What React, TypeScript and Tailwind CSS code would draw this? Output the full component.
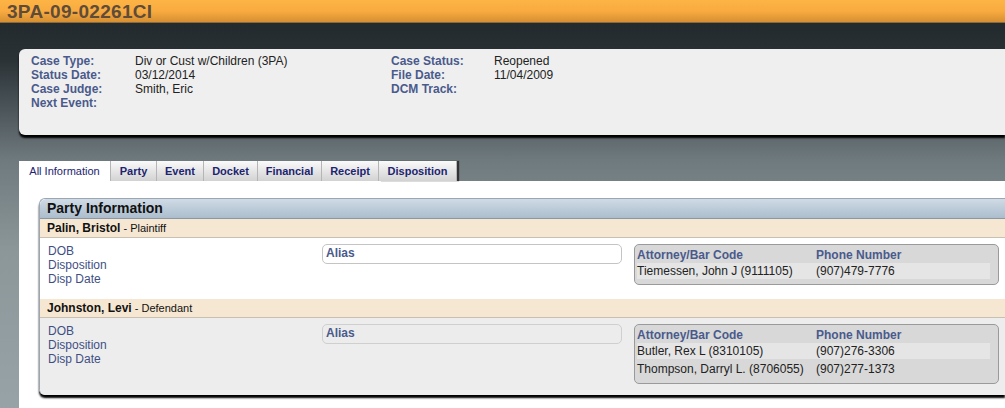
import React from "react";

const label = "text-[#4a5a8c] font-bold";

function InfoRow({ l, v, l2, v2 }: { l: string; v?: string; l2?: string; v2?: string }) {
  return (
    <div className="flex h-[14px]">
      <div className={`w-[104px] ${label}`}>{l}</div>
      <div className="w-[256px] text-[#222]">{v}</div>
      <div className={`w-[103px] ${label}`}>{l2}</div>
      <div className="text-[#222]">{v2}</div>
    </div>
  );
}

const tabs = ["All Information", "Party", "Event", "Docket", "Financial", "Receipt", "Disposition"];
const tabW = ["w-[92px]", "w-[46px]", "w-[47px]", "w-[54px]", "w-[64px]", "w-[57px]", "w-[78px]"];

function Party({
  name,
  role,
  bg,
  attorneys,
  last,
}: {
  name: string;
  role: string;
  bg: string;
  attorneys: [string, string][];
  last?: boolean;
}) {
  return (
    <>
      <div className="h-[19px] bg-[#f6e7d2] border-b border-[#c9c0b2] pl-[7px] flex items-center text-[12px]">
        <span className="font-bold text-[#111]">{name}</span>
        <span className="text-[11px] text-[#111]">&nbsp;- {role}</span>
      </div>
      <div className={`${bg} flex ${last ? "h-[77px] rounded-bl-[6px]" : "h-[61px]"} pt-[6px]`}>
        <div className="w-[282px] pl-[8px] text-[12px] leading-[14px] text-[#3f4f85]">
          <div>DOB</div>
          <div>Disposition</div>
          <div>Disp Date</div>
        </div>
        <div
          className={`w-[300px] h-[20px] rounded-[5px] border ${
            last ? "border-[#cfcfcf] bg-[#ececec]" : "border-[#c4c4c4] bg-white"
          } pl-[3px] text-[12px] leading-[17px] font-bold text-[#4a5a8c]`}
        >
          Alias
        </div>
        <div className="ml-[12px] w-[365px] self-start rounded-[5px] border border-[#9a9a9a] bg-[#d8d8d8] pl-[2px] pr-[8px] pt-[2px] pb-[5px] text-[12px]">
          <div className="flex h-[15px] items-center font-bold text-[#4a5a8c]">
            <div className="w-[179px]">Attorney/Bar Code</div>
            <div>Phone Number</div>
          </div>
          {attorneys.map(([a, p], i) => (
            <div
              key={i}
              className={`flex items-center text-[#222] ${i === 0 ? "h-[16px] bg-[#e5e5e5] mt-[1px]" : "h-[19px]"}`}
            >
              <div className="w-[179px] whitespace-nowrap">{a}</div>
              <div>{p}</div>
            </div>
          ))}
        </div>
      </div>
    </>
  );
}

export default function App() {
  return (
    <div
      className="w-[1005px] h-[408px] overflow-hidden flex flex-col"
      style={{ fontFamily: '"Liberation Sans", Arial, sans-serif' }}
    >
      <div className="h-[23px] shrink-0 bg-gradient-to-b from-[#fdb445] via-[#f9ab40] to-[#d68f32] border-b border-[#8a6a3a] pl-[7px] flex items-center">
        <span className="text-[19px] font-bold text-[#5e4c39] leading-none tracking-[0.3px]">3PA-09-02261CI</span>
      </div>
      <div className="flex-1 bg-[linear-gradient(to_bottom,#222a2e_0%,#2a3236_8%,#6f7a7e_30%,#8c979a_50%,#9ca8ac_100%)] pl-[19px] pt-[26px]">
        <div className="h-[86px] bg-[#efefef] rounded-l-[6px] shadow-[0_3px_2px_#000] pl-[12px] pt-[5px] text-[12px] leading-[14px]">
          <InfoRow l="Case Type:" v="Div or Cust w/Children (3PA)" l2="Case Status:" v2="Reopened" />
          <InfoRow l="Status Date:" v="03/12/2014" l2="File Date:" v2="11/04/2009" />
          <InfoRow l="Case Judge:" v="Smith, Eric" l2="DCM Track:" />
          <InfoRow l="Next Event:" />
        </div>
        <div className="mt-[26px] flex h-[20px]">
          {tabs.map((t, i) => (
            <div
              key={t}
              className={`${tabW[i]} h-[20px] flex items-center justify-center text-[11px] text-[#1c2470] border-r border-[#b5b5b5] ${
                i === 0 ? "bg-white font-normal" : "bg-gradient-to-b from-[#fafafa] to-[#d2d2d2] font-bold"
              } ${i === tabs.length - 1 ? "shadow-[2px_0_1px_#333]" : ""}`}
            >
              {t}
            </div>
          ))}
        </div>
        <div className="bg-white h-[300px] pl-[20px] pt-[17px]">
          <div className="border-l border-t border-[#9aa6b2] rounded-tl-[6px] rounded-bl-[6px] shadow-[0_3px_2px_#000]">
            <div className="h-[20px] rounded-tl-[6px] bg-gradient-to-b from-[#d0dbe6] to-[#abbdcd] border-b border-[#8a98a5] pl-[7px] flex items-center text-[14px] font-bold text-[#111]">
              Party Information
            </div>
            <Party
              name="Palin, Bristol"
              role="Plaintiff"
              bg="bg-white"
              attorneys={[["Tiemessen, John J (9111105)", "(907)479-7776"]]}
            />
            <Party
              name="Johnston, Levi"
              role="Defendant"
              bg="bg-[#ededed]"
              last
              attorneys={[
                ["Butler, Rex L (8310105)", "(907)276-3306"],
                ["Thompson, Darryl L. (8706055)", "(907)277-1373"],
              ]}
            />
          </div>
        </div>
      </div>
    </div>
  );
}
